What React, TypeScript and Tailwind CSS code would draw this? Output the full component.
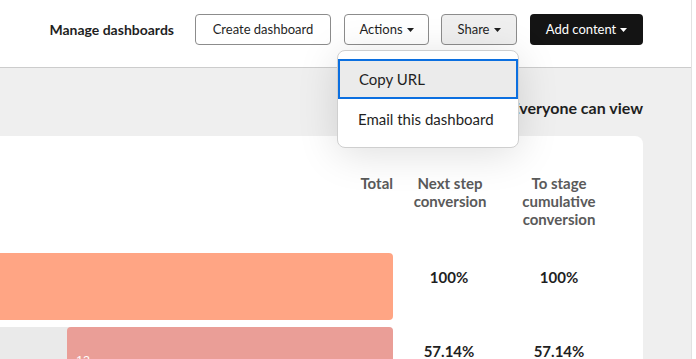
const Caret = () => (
  <svg width="7" height="4" viewBox="0 0 7 4" className="ml-1 inline-block" aria-hidden="true">
    <path d="M0 0h7L3.5 4z" fill="currentColor" />
  </svg>
)

export default function App() {
  return (
    <div className="relative w-[696px] h-[359px] overflow-hidden bg-white font-['Lato',sans-serif] text-[#1f1f1f]">
      <div className="flex h-full">
        <div className="w-[692px] h-full flex flex-col border-r border-[#e2e2e2] bg-[#efefef]">
          {/* Header */}
          <header className="h-[68px] shrink-0 bg-white border-b border-[#cccccc] flex items-start justify-end pr-[48px] pt-[14px] text-[13px]">
            <span className="h-[31px] flex items-center text-[14px] font-bold mr-[21px]">Manage dashboards</span>
            <button className="h-[31px] w-[136px] rounded-[4px] border border-[#8c8c8c] bg-white">
              Create dashboard
            </button>
            <button className="ml-[13px] h-[31px] w-[85px] rounded-[4px] border border-[#8c8c8c] bg-white flex items-center justify-center">
              Actions <Caret />
            </button>
            <button className="ml-[12px] h-[31px] w-[76px] rounded-[4px] border border-[#8c8c8c] bg-[#efefef] flex items-center justify-center">
              Share <Caret />
            </button>
            <button className="ml-[13px] h-[31px] w-[113px] rounded-[4px] bg-[#141414] text-white flex items-center justify-center">
              Add content <Caret />
            </button>
          </header>

          {/* Body */}
          <div className="flex-1 pr-[48px] flex flex-col">
            <div className="h-[68px] flex justify-end pt-[30px]">
              <span className="text-[16px] leading-[20px] font-bold">Everyone can view</span>
            </div>
            <div className="flex-1 bg-white rounded-tr-[8px] pt-[38px]">
              <div className="grid grid-cols-[393px_112px_108px] text-[15px] leading-[18px] font-bold text-[#5a5a5a]">
                <div className="flex justify-end">Total</div>
                <div className="text-center pl-[2px]">
                  Next step
                  <br />
                  conversion
                </div>
                <div className="text-center">
                  To stage
                  <br />
                  cumulative
                  <br />
                  conversion
                </div>
              </div>

              <div className="mt-[25px] grid grid-cols-[393px_112px_108px] gap-y-[7px] text-[15px] font-bold">
                <div className="h-[67px] bg-[#ffa584] rounded-r-[4px]" />
                <div className="pt-[13px] text-center">100%</div>
                <div className="pt-[13px] text-center">100%</div>

                <div className="h-[67px] bg-[#eaeaea] flex rounded-r-[4px]">
                  <div className="ml-[67px] flex-1 bg-[#ea9e97] rounded-[4px] pt-[24px] pl-[9px] text-[12px] font-normal text-white">
                    12
                  </div>
                </div>
                <div className="pt-[13px] text-center">57.14%</div>
                <div className="pt-[13px] text-center">57.14%</div>
              </div>
            </div>
          </div>
        </div>
      </div>

      {/* Share dropdown */}
      <div className="absolute left-[337px] top-[50px] w-[182px] rounded-[8px] border border-[#cfcfcf] bg-white py-[8px] shadow-[0_6px_40px_rgba(0,0,0,0.13)] text-[15px]">
        <div className="h-[40px] flex items-center pl-[19px] bg-[#ebebeb] border-2 border-[#0b6fe0]">Copy URL</div>
        <div className="h-[40px] flex items-center pl-[20px]">Email this dashboard</div>
      </div>
    </div>
  )
}
